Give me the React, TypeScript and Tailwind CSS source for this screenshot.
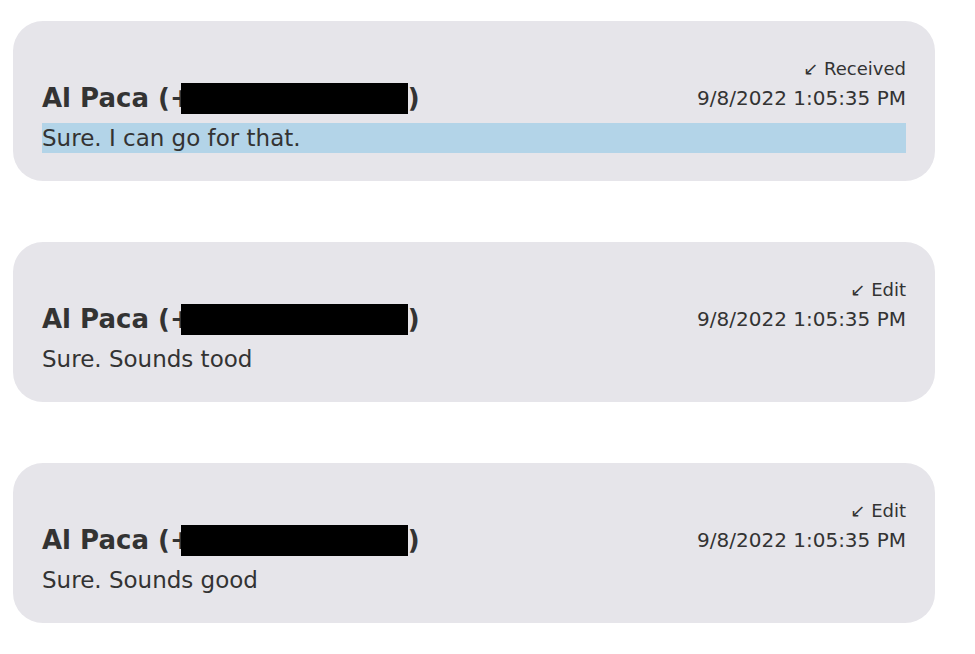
import React from 'react';

interface Message {
  status: string;
  time: string;
  text: string;
  selected?: boolean;
}

const messages: Message[] = [
  { status: 'Received', time: '9/8/2022 1:05:35 PM', text: 'Sure. I can go for that.', selected: true },
  { status: 'Edit', time: '9/8/2022 1:05:35 PM', text: 'Sure. Sounds tood' },
  { status: 'Edit', time: '9/8/2022 1:05:35 PM', text: 'Sure. Sounds good' },
];

const MessageCard: React.FC<{ msg: Message }> = ({ msg }) => (
  <div className="bg-[#e6e5ea] rounded-[30px] pl-[29px] pr-[29px] pt-[37px] pb-[28px] text-[#333333]">
    <div className="flex justify-between items-end">
      <div className="text-[26px] leading-[32px] font-bold whitespace-nowrap">
        Al Paca (<span>+</span>
        <span className="inline-block w-[227px] h-[31px] bg-black -ml-[11px] align-[-7px]" />)
      </div>
      <div className="flex flex-col items-end">
        <div className="text-[18px] leading-[22px] mb-[6px]">↙ {msg.status}</div>
        <div className="text-[20px] leading-[24px] pb-[4px]">{msg.time}</div>
      </div>
    </div>
    <div className={`mt-[9px] text-[23px] leading-[30px] ${msg.selected ? 'bg-[#b3d4e8]' : ''}`}>
      {msg.text}
    </div>
  </div>
);

export default function App() {
  return (
    <div className="w-[975px] h-[654px] bg-white pl-[13px] pt-[21px]" style={{ fontFamily: '"DejaVu Sans", Verdana, sans-serif' }}>
      <div className="w-[922px] flex flex-col gap-[61px]">
        {messages.map((m, i) => (
          <MessageCard key={i} msg={m} />
        ))}
      </div>
    </div>
  );
}
